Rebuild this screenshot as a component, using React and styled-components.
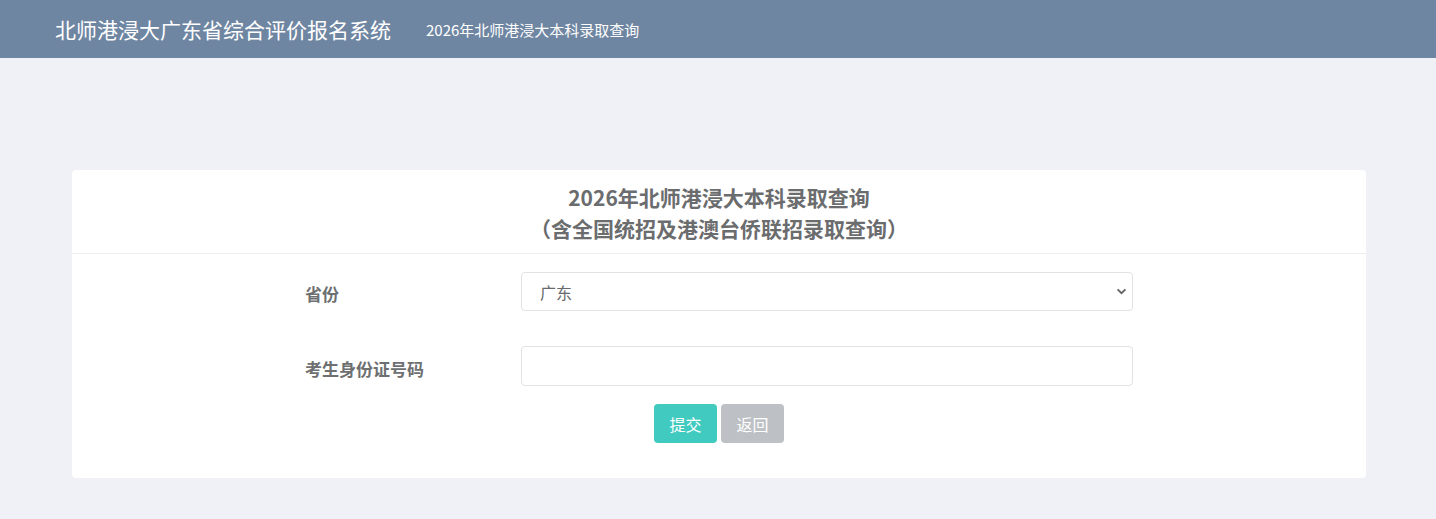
import React, { useState } from 'react'
import styled, { createGlobalStyle } from 'styled-components'

const GlobalStyle = createGlobalStyle`
  html, body {
    margin: 0;
    padding: 0;
    background: #f0f1f6;
    font-family: "Noto Sans CJK SC", "Noto Sans", "Liberation Sans", sans-serif;
  }
`

const provinces = ['广东', '北京', '上海', '福建', '广西', '湖南', '江西', '海南']

export default function App() {
  const [province, setProvince] = useState('广东')
  const [idNumber, setIdNumber] = useState('')

  return (
    <Page>
      <GlobalStyle />
      <NavBar>
        <Brand>北师港浸大广东省综合评价报名系统</Brand>
        <NavLink>2026年北师港浸大本科录取查询</NavLink>
      </NavBar>

      <Main>
        <Card>
          <CardHeader>
            <Title>2026年北师港浸大本科录取查询</Title>
            <Title>（含全国统招及港澳台侨联招录取查询）</Title>
          </CardHeader>

          <Form onSubmit={e => e.preventDefault()}>
            <Row>
              <Label>省份</Label>
              <Select value={province} onChange={e => setProvince(e.target.value)}>
                {provinces.map(p => <option key={p}>{p}</option>)}
              </Select>
            </Row>
            <Row>
              <Label>考生身份证号码</Label>
              <Input value={idNumber} onChange={e => setIdNumber(e.target.value)} />
            </Row>
            <Actions>
              <Button type="submit" primary>提交</Button>
              <Button type="button">返回</Button>
            </Actions>
          </Form>
        </Card>
      </Main>
    </Page>
  )
}

const Page = styled.div`
  min-height: 519px;
`

const NavBar = styled.header`
  height: 58px;
  background: #6f86a2;
  display: flex;
  align-items: center;
  padding: 0 0 0 55px;
  color: #fff;
`

const Brand = styled.span`
  font-size: 21px;
  line-height: 1;
  margin-right: 35px;
  margin-top: 1px;
`

const NavLink = styled.span`
  font-size: 15px;
  line-height: 1;
`

const Main = styled.main`
  padding: 112px 70px 40px 72px;
`

const Card = styled.section`
  background: #fff;
  border-radius: 4px;
  padding-bottom: 35px;
`

const CardHeader = styled.div`
  padding: 12px 0 9px;
  border-bottom: 1px solid #eceef1;
  text-align: center;
`

const Title = styled.h3`
  margin: 0;
  font-size: 21px;
  line-height: 31px;
  font-weight: 700;
  color: #6b6c6e;
`

const Form = styled.form`
  width: 828px;
  margin: 0 auto;
  padding-top: 18px;
  display: flex;
  flex-direction: column;
  gap: 35px;
`

const Row = styled.div`
  display: grid;
  grid-template-columns: 216px 612px;
  align-items: center;
`

const Label = styled.label`
  font-size: 17px;
  font-weight: 700;
  color: #6d6f71;
  padding-top: 4px;
`

const fieldBase = `
  box-sizing: border-box;
  width: 612px;
  height: 39px;
  border: 1px solid #e1e2e4;
  border-radius: 4px;
  background: #fff;
  font-family: inherit;
  font-size: 16px;
  color: #676a6c;
  outline: none;
`

const Select = styled.select`
  ${fieldBase}
  padding: 0 30px 0 18px;
  appearance: none;
  background-image: url("data:image/svg+xml,%3Csvg xmlns='http://www.w3.org/2000/svg' width='12' height='8' viewBox='0 0 12 8'%3E%3Cpath d='M1.5 1.5l4.5 4.5 4.5-4.5' fill='none' stroke='%23666' stroke-width='2.2'/%3E%3C/svg%3E");
  background-repeat: no-repeat;
  background-position: right 5px center;
  background-size: 11px 7px;
`

const Input = styled.input`
  ${fieldBase}
  height: 40px;
  padding: 0 18px;
`

const Actions = styled.div`
  display: flex;
  justify-content: center;
  gap: 4px;
  margin-top: -17px;
`

const Button = styled.button`
  width: 63px;
  height: 39px;
  border: none;
  border-radius: 4px;
  font-family: inherit;
  font-size: 16px;
  color: #fff;
  background: ${p => (p.primary ? '#41cbc0' : '#bdc1c5')};
  cursor: pointer;
`
